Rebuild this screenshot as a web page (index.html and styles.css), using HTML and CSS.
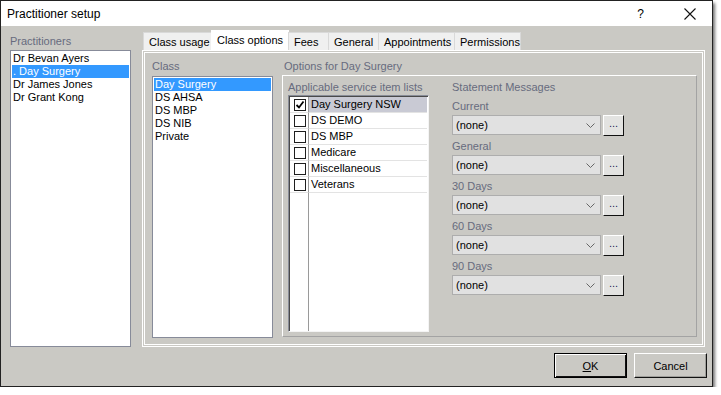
FILE: index.html
```html
<!DOCTYPE html>
<html lang="en">
<head>
  <meta charset="UTF-8">
  <title>Practitioner setup</title>
  <link rel="stylesheet" href="styles.css">
</head>
<body>

  <div class="dialog">
    <div class="titlebar">
      <span class="title">Practitioner setup</span>
      <span class="help">?</span>
      <svg class="close" width="12" height="12" viewBox="0 0 12 12">
        <path d="M0.5 0.5 L11.5 11.5 M11.5 0.5 L0.5 11.5" stroke="#111" stroke-width="1.1" fill="none"/>
      </svg>
    </div>

    <div class="main">
      <div class="side">
        <div class="label side-label">Practitioners</div>
        <div class="listbox prac-list">
          <div class="item">Dr Bevan Ayers</div>
          <div class="item selected">. Day Surgery</div>
          <div class="item">Dr James Jones</div>
          <div class="item">Dr Grant Kong</div>
        </div>
      </div>

      <div class="tabctl">
        <div class="tabstrip">
          <div class="tab tab-usage">Class usage</div>
          <div class="tab active">Class options</div>
          <div class="tab tab-fees">Fees</div>
          <div class="tab tab-general">General</div>
          <div class="tab tab-appt">Appointments</div>
          <div class="tab tab-perm">Permissions</div>
        </div>

        <div class="panel">
          <div class="class-col">
            <div class="label">Class</div>
            <div class="listbox class-list">
              <div class="item selected">Day Surgery</div>
              <div class="item">DS AHSA</div>
              <div class="item">DS MBP</div>
              <div class="item">DS NIB</div>
              <div class="item">Private</div>
            </div>
          </div>

          <div class="options-col">
            <div class="label">Options for Day Surgery</div>
            <div class="groupbox">
              <div class="svc-col">
                <div class="label">Applicable service item lists</div>
                <div class="checklist">
                  <div class="row">
                    <div class="chk-cell"><span class="chk checked">
                      <svg width="10" height="10" viewBox="0 0 10 10"><path d="M1.5 5 L4 7.5 L8.5 1.5" stroke="#000" stroke-width="1.8" fill="none"/></svg>
                    </span></div>
                    <div class="txt-cell sel">Day Surgery NSW</div>
                  </div>
                  <div class="row">
                    <div class="chk-cell"><span class="chk"></span></div>
                    <div class="txt-cell">DS DEMO</div>
                  </div>
                  <div class="row">
                    <div class="chk-cell"><span class="chk"></span></div>
                    <div class="txt-cell">DS MBP</div>
                  </div>
                  <div class="row">
                    <div class="chk-cell"><span class="chk"></span></div>
                    <div class="txt-cell">Medicare</div>
                  </div>
                  <div class="row">
                    <div class="chk-cell"><span class="chk"></span></div>
                    <div class="txt-cell">Miscellaneous</div>
                  </div>
                  <div class="row">
                    <div class="chk-cell"><span class="chk"></span></div>
                    <div class="txt-cell">Veterans</div>
                  </div>
                  <div class="row-fill">
                    <div class="chk-cell"></div>
                    <div class="txt-cell"></div>
                  </div>
                </div>
              </div>

              <div class="msg-col">
                <div class="label msg-head">Statement Messages</div>

                <div class="field">
                  <div class="label field-label">Current</div>
                  <div class="field-row">
                    <div class="combo">(none)<svg class="chev" width="9" height="5" viewBox="0 0 9 5"><path d="M0.5 0.5 L4.5 4.5 L8.5 0.5" stroke="#666" fill="none"/></svg></div>
                    <div class="ellipsis">...</div>
                  </div>
                </div>
                <div class="field">
                  <div class="label field-label">General</div>
                  <div class="field-row">
                    <div class="combo">(none)<svg class="chev" width="9" height="5" viewBox="0 0 9 5"><path d="M0.5 0.5 L4.5 4.5 L8.5 0.5" stroke="#666" fill="none"/></svg></div>
                    <div class="ellipsis">...</div>
                  </div>
                </div>
                <div class="field">
                  <div class="label field-label">30 Days</div>
                  <div class="field-row">
                    <div class="combo">(none)<svg class="chev" width="9" height="5" viewBox="0 0 9 5"><path d="M0.5 0.5 L4.5 4.5 L8.5 0.5" stroke="#666" fill="none"/></svg></div>
                    <div class="ellipsis">...</div>
                  </div>
                </div>
                <div class="field">
                  <div class="label field-label">60 Days</div>
                  <div class="field-row">
                    <div class="combo">(none)<svg class="chev" width="9" height="5" viewBox="0 0 9 5"><path d="M0.5 0.5 L4.5 4.5 L8.5 0.5" stroke="#666" fill="none"/></svg></div>
                    <div class="ellipsis">...</div>
                  </div>
                </div>
                <div class="field">
                  <div class="label field-label">90 Days</div>
                  <div class="field-row">
                    <div class="combo">(none)<svg class="chev" width="9" height="5" viewBox="0 0 9 5"><path d="M0.5 0.5 L4.5 4.5 L8.5 0.5" stroke="#666" fill="none"/></svg></div>
                    <div class="ellipsis">...</div>
                  </div>
                </div>
              </div>
            </div>
          </div>
        </div>
      </div>
    </div>

    <div class="footer">
      <button class="btn btn-default"><u>O</u>K</button>
      <button class="btn">Cancel</button>
    </div>
  </div>

</body>
</html>
```

FILE: styles.css
```css
body {
  margin: 0;
  background: #fff;
  font-family: "Liberation Sans", Arial, sans-serif;
  font-size: 11px;
  color: #000;
}

.dialog {
  width: 711px;
  height: 385px;
  border: 1px solid #222;
  background: #cac9c4;
  box-shadow: 2px 3px 3px rgba(0, 0, 0, 0.55);
  display: flex;
  flex-direction: column;
}

.titlebar {
  height: 25px;
  background: #fff;
  display: flex;
  align-items: center;
  padding-left: 6px;
}

.title {
  font-size: 12px;
  flex: 1;
}

.help {
  font-size: 12px;
  margin-right: 40px;
}

.close {
  margin-right: 16px;
}

.label {
  color: #676b7e;
  line-height: 14px;
}

/* main area */
.main {
  display: flex;
  padding: 4px 0 0 9px;
  height: 317px;
}

.side {
  width: 121px;
  margin-right: 11px;
  display: flex;
  flex-direction: column;
}

.side-label {
  padding-top: 4px;
  height: 16px;
}

.listbox {
  background: #fff;
  border: 1px solid #878b99;
  box-sizing: border-box;
  padding: 1px;
}

.item {
  height: 13px;
  line-height: 13px;
  padding-left: 1px;
  white-space: nowrap;
}

.item.selected {
  background: #3399ff;
  color: #fff;
}

.prac-list {
  height: 297px;
}

/* tabs */
.tabctl {
  width: 563px;
  display: flex;
  flex-direction: column;
}

.tabstrip {
  display: flex;
  height: 20px;
  padding-left: 1px;
  position: relative;
  z-index: 1;
}

.tab {
  margin-top: 2px;
  height: 18px;
  line-height: 18px;
  padding: 0 5px;
  box-sizing: border-box;
  background: #f0f0f0;
  border: 1px solid #d9d9d9;
  border-bottom: none;
  margin-left: -1px;
  white-space: nowrap;
}

.tab:first-child {
  margin-left: 0;
}

.tab.active {
  margin-top: 0;
  height: 21px;
  line-height: 19px;
  background: #fff;
  border-color: #fff;
}

.tab-usage { width: 69px; }
.tab.active { width: 78px; }
.tab-fees { width: 41px; }
.tab-general { width: 51px; }
.tab-appt { width: 77px; }
.tab-perm { width: 67px; }

.panel {
  height: 297px;
  box-sizing: border-box;
  border: 1px solid #fff;
  box-shadow: inset 0 0 0 1px #cac9c4, inset 0 0 0 2px #fff;
  display: flex;
  padding: 8px 0 0 9px;
}

.class-col {
  width: 121px;
  margin-right: 9px;
  display: flex;
  flex-direction: column;
}

.class-col .label {
  height: 17px;
}

.class-list {
  height: 262px;
}

.options-col {
  width: 415px;
  display: flex;
  flex-direction: column;
}

.options-col > .label {
  height: 16px;
  padding-left: 2px;
}

.groupbox {
  height: 262px;
  box-sizing: border-box;
  border-top: 1px solid #fff;
  border-left: 1px solid #fff;
  border-right: 1px solid #a3a3a3;
  border-bottom: 1px solid #a3a3a3;
  display: flex;
  padding: 4px 0 0 5px;
}

.svc-col {
  width: 141px;
  margin-right: 23px;
  display: flex;
  flex-direction: column;
}

.svc-col .label {
  height: 15px;
}

.checklist {
  height: 237px;
  box-sizing: border-box;
  background: #fff;
  border-top: 1px solid #898d98;
  border-left: 1px solid #898d98;
  border-right: 1px solid #f4f4f4;
  border-bottom: 1px solid #f4f4f4;
  box-shadow: inset 1px 1px 0 #4a4a4a;
  padding: 1px 1px 0 1px;
  display: flex;
  flex-direction: column;
}

.row {
  display: flex;
  height: 16px;
}

.row-fill {
  display: flex;
  flex: 1;
}

.chk-cell {
  width: 19px;
  border-right: 1px solid #9a9a9a;
  display: flex;
  align-items: center;
  justify-content: center;
  padding-left: 2px;
  box-sizing: border-box;
}

.row .chk-cell,
.row .txt-cell {
  border-bottom: 1px solid #e3e3e3;
}

.txt-cell {
  flex: 1;
  line-height: 15px;
  padding-left: 2px;
}

.txt-cell.sel {
  background: #c9cad4;
}

.chk {
  width: 12px;
  height: 12px;
  box-sizing: border-box;
  border: 1px solid #1e1e1e;
  background: #fff;
  display: flex;
  align-items: center;
  justify-content: center;
}

/* statement messages */
.msg-col {
  display: flex;
  flex-direction: column;
  width: 175px;
}

.msg-head {
  height: 15px;
}

.field-label {
  height: 20px;
  line-height: 23px;
}

.field:first-of-type .field-label {
  height: 17px;
  line-height: 17px;
}

.field-row {
  display: flex;
  height: 20px;
}

.combo {
  width: 149px;
  height: 20px;
  box-sizing: border-box;
  border: 1px solid #adadad;
  background: #e1e1e1;
  padding-left: 3px;
  line-height: 18px;
  display: flex;
  align-items: center;
  justify-content: space-between;
  padding-right: 5px;
}

.ellipsis {
  margin-left: 2px;
  width: 21px;
  height: 21px;
  box-sizing: border-box;
  border-top: 1px solid #fff;
  border-left: 1px solid #fff;
  border-right: 1px solid #111;
  border-bottom: 1px solid #111;
  background: #e3e3e1;
  color: #231a5a;
  text-align: center;
  line-height: 15px;
  letter-spacing: 0;
}

/* footer */
.footer {
  display: flex;
  justify-content: flex-end;
  gap: 7px;
  padding: 6px 5px 0 0;
}

.btn {
  width: 73px;
  height: 25px;
  font-family: "Liberation Sans", Arial, sans-serif;
  font-size: 11px;
  background: #cac9c4;
  border-top: 1px solid #fff;
  border-left: 1px solid #fff;
  border-right: 1px solid #111;
  border-bottom: 1px solid #111;
  box-shadow: inset -1px -1px 0 #9e9e9a;
  padding: 0;
  color: #000;
}

.btn-default {
  border: 1px solid #000;
  box-shadow: inset 1px 1px 0 #fff, inset -1px -1px 0 #111;
}
```
